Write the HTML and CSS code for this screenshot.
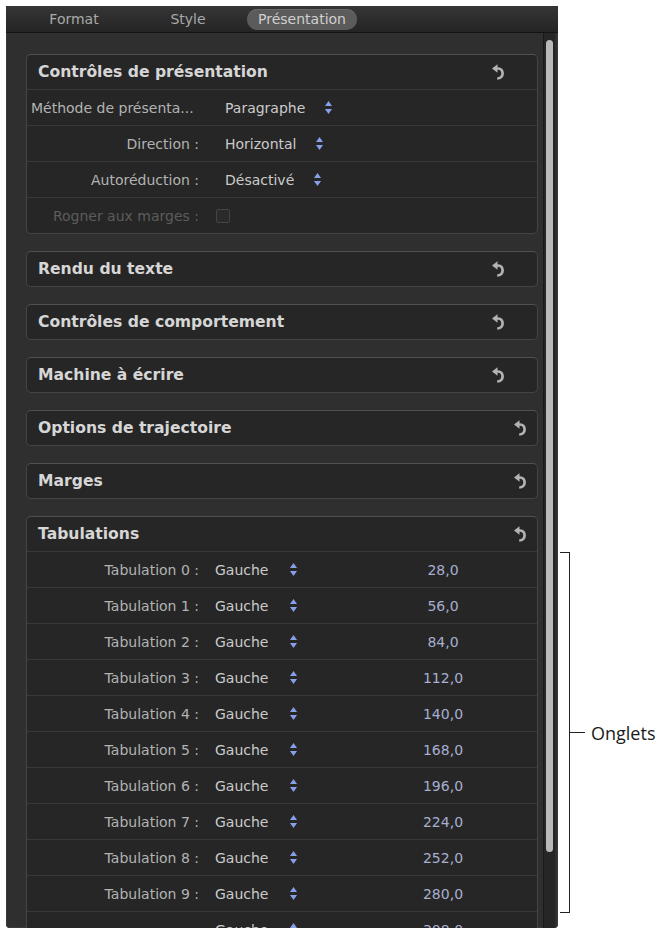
FILE: index.html
```html
<!DOCTYPE html>
<html lang="fr">
<head>
  <meta charset="UTF-8" />
  <meta name="viewport" content="width=device-width,initial-scale=1.0" />
  <title>Inspecteur – Présentation</title>
  <link rel="stylesheet" href="styles.css">
</head>
<body>
  <div class="page">
    <div class="panel">
      <div class="tabbar">
        <span class="tab">Format</span>
        <span class="tab">Style</span>
        <span class="tab"><span class="pill">Présentation</span></span>
      </div>

      <div class="panel-body">
        <div class="groups">

          <section class="group">
            <div class="group-head">
              <span>Contrôles de présentation</span>
              <svg class="reset" viewBox="0 0 12 16"><polygon points="0,4.5 5.5,0.3 5.5,8.7"/><path d="M5 4.5 H6 C9 4.5 10.6 6.8 10.6 9.5 C10.6 12.4 8.6 14.5 5.2 14.5"/></svg>
            </div>
            <div class="row">
              <span class="label label-cut">Méthode de présenta...</span>
              <span class="value">Paragraphe</span>
              <svg class="stepper" viewBox="0 0 7 13"><polygon points="3.5,0 7,5 0,5"/><polygon points="0,8 7,8 3.5,13"/></svg>
            </div>
            <div class="row">
              <span class="label">Direction :</span>
              <span class="value">Horizontal</span>
              <svg class="stepper" viewBox="0 0 7 13"><polygon points="3.5,0 7,5 0,5"/><polygon points="0,8 7,8 3.5,13"/></svg>
            </div>
            <div class="row">
              <span class="label">Autoréduction :</span>
              <span class="value">Désactivé</span>
              <svg class="stepper" viewBox="0 0 7 13"><polygon points="3.5,0 7,5 0,5"/><polygon points="0,8 7,8 3.5,13"/></svg>
            </div>
            <div class="row row-off">
              <span class="label">Rogner aux marges :</span>
              <span class="checkbox"></span>
            </div>
          </section>

          <section class="group">
            <div class="group-head">
              <span>Rendu du texte</span>
              <svg class="reset" viewBox="0 0 12 16"><polygon points="0,4.5 5.5,0.3 5.5,8.7"/><path d="M5 4.5 H6 C9 4.5 10.6 6.8 10.6 9.5 C10.6 12.4 8.6 14.5 5.2 14.5"/></svg>
            </div>
          </section>

          <section class="group">
            <div class="group-head">
              <span>Contrôles de comportement</span>
              <svg class="reset" viewBox="0 0 12 16"><polygon points="0,4.5 5.5,0.3 5.5,8.7"/><path d="M5 4.5 H6 C9 4.5 10.6 6.8 10.6 9.5 C10.6 12.4 8.6 14.5 5.2 14.5"/></svg>
            </div>
          </section>

          <section class="group">
            <div class="group-head">
              <span>Machine à écrire</span>
              <svg class="reset" viewBox="0 0 12 16"><polygon points="0,4.5 5.5,0.3 5.5,8.7"/><path d="M5 4.5 H6 C9 4.5 10.6 6.8 10.6 9.5 C10.6 12.4 8.6 14.5 5.2 14.5"/></svg>
            </div>
          </section>

          <section class="group group-edge">
            <div class="group-head">
              <span>Options de trajectoire</span>
              <svg class="reset" viewBox="0 0 12 16"><polygon points="0,4.5 5.5,0.3 5.5,8.7"/><path d="M5 4.5 H6 C9 4.5 10.6 6.8 10.6 9.5 C10.6 12.4 8.6 14.5 5.2 14.5"/></svg>
            </div>
          </section>

          <section class="group group-edge">
            <div class="group-head">
              <span>Marges</span>
              <svg class="reset" viewBox="0 0 12 16"><polygon points="0,4.5 5.5,0.3 5.5,8.7"/><path d="M5 4.5 H6 C9 4.5 10.6 6.8 10.6 9.5 C10.6 12.4 8.6 14.5 5.2 14.5"/></svg>
            </div>
          </section>

          <section class="group group-edge">
            <div class="group-head">
              <span>Tabulations</span>
              <svg class="reset" viewBox="0 0 12 16"><polygon points="0,4.5 5.5,0.3 5.5,8.7"/><path d="M5 4.5 H6 C9 4.5 10.6 6.8 10.6 9.5 C10.6 12.4 8.6 14.5 5.2 14.5"/></svg>
            </div>
            <div id="tabs"></div>
          </section>

        </div>
        <div class="scroll"><div class="thumb"></div></div>
      </div>
    </div>

    <div class="callout">
      <div class="bracket"></div>
      <div class="tick"></div>
      <span class="callout-text">Onglets</span>
    </div>
  </div>

  <script>
    // tab stops every 28 points
    const stepper = '<svg class="stepper" viewBox="0 0 7 13"><polygon points="3.5,0 7,5 0,5"/><polygon points="0,8 7,8 3.5,13"/></svg>';
    const tabs = document.getElementById('tabs');
    for (let i = 0; i < 11; i++) {
      const label = i < 10 ? 'Tabulation ' + i + ' :' : '';
      const pos = ((i + 1) * 28).toFixed(1).replace('.', ',');
      tabs.innerHTML += `
        <div class="row tab-row">
          <span class="label">${label}</span>
          <span class="value">Gauche</span>
          ${stepper}
          <span class="num">${pos}</span>
        </div>`;
    }
  </script>
</body>
</html>
```

FILE: styles.css
```css
body {
  margin: 0;
  background: #fff;
  font-family: "DejaVu Sans", sans-serif;
  font-size: 14px;
}
.page {
  display: flex;
  align-items: flex-start;
  padding: 6px;
}
.panel {
  width: 552px;
  height: 922px;
  flex: none;
  background: #2f2f2f;
  border-radius: 0 0 4px 4px;
  box-shadow: inset 0 0 0 1px #3a3a3a;
  overflow: hidden;
  display: flex;
  flex-direction: column;
}
.tabbar {
  height: 26px;
  flex: none;
  display: flex;
  align-items: center;
  padding-left: 11px;
  background: linear-gradient(#363636, #242424);
  border-bottom: 1px solid #141414;
}
.tab {
  width: 114px;
  text-align: center;
  color: #a9a9a9;
}
.pill {
  display: block;
  margin: 0 2px;
  height: 21px;
  line-height: 21px;
  border-radius: 11px;
  background: #5b5b5b;
  color: #cfcfcf;
  box-shadow: inset 0 1px 0 #6a6a6a;
}
.panel-body {
  flex: 1;
  display: flex;
  min-height: 0;
}
.groups {
  width: 512px;
  padding: 21px 0 0 20px;
}
.group {
  background: #262626;
  border: 1px solid #454545;
  border-top-color: #505050;
  border-radius: 5px;
  margin-bottom: 17px;
}
.group-head {
  height: 34px;
  display: flex;
  align-items: center;
  justify-content: space-between;
  padding: 0 33px 0 11px;
  font-size: 15.6px;
  font-weight: bold;
  color: #d6d6d6;
}
.group-edge .group-head {
  padding-right: 11px;
}
.reset {
  width: 12px;
  height: 16px;
  fill: #b3b3b3;
}
.reset path {
  fill: none;
  stroke: #b3b3b3;
  stroke-width: 2.7;
}
.row {
  height: 35px;
  display: flex;
  align-items: center;
  border-top: 1px solid #393939;
}
.label {
  width: 172px;
  flex: none;
  box-sizing: border-box;
  padding-left: 4px;
  margin-right: 26px;
  text-align: right;
  white-space: nowrap;
  color: #b3b3b3;
}
.label-cut {
  text-align: left;
}
.value {
  color: #cbcbcb;
}
.stepper {
  width: 7px;
  height: 13px;
  margin-left: 20px;
  fill: #86a0ec;
}
.row-off .label {
  color: #5c5c5c;
}
.checkbox {
  width: 12px;
  height: 12px;
  margin-left: -9px;
  border: 1px solid #444;
  border-radius: 2px;
  background: #2a2a2a;
}
.tab-row .label {
  margin-right: 16px;
}
.tab-row .value {
  width: 55px;
}
.num {
  width: 80px;
  margin-left: 106px;
  text-align: center;
  color: #a8aed0;
}
.scroll {
  width: 12px;
  flex: none;
  margin-left: 5px;
  padding: 7px 2px 0 2px;
  box-sizing: border-box;
  background: #262626;
  border-left: 1px solid #1a1a1a;
}
.thumb {
  width: 7px;
  height: 812px;
  border-radius: 4px;
  background: #bababa;
}
.callout {
  display: flex;
  align-items: center;
  margin: 546px 0 0 2px;
  height: 361px;
}
.bracket {
  width: 9px;
  height: 359px;
  border: 1px solid #222;
  border-left: none;
}
.tick {
  width: 15px;
  height: 1px;
  background: #222;
}
.callout-text {
  margin-left: 6px;
  font-family: "Open Sans", sans-serif;
  font-size: 18px;
  color: #1a1a1a;
}
```
